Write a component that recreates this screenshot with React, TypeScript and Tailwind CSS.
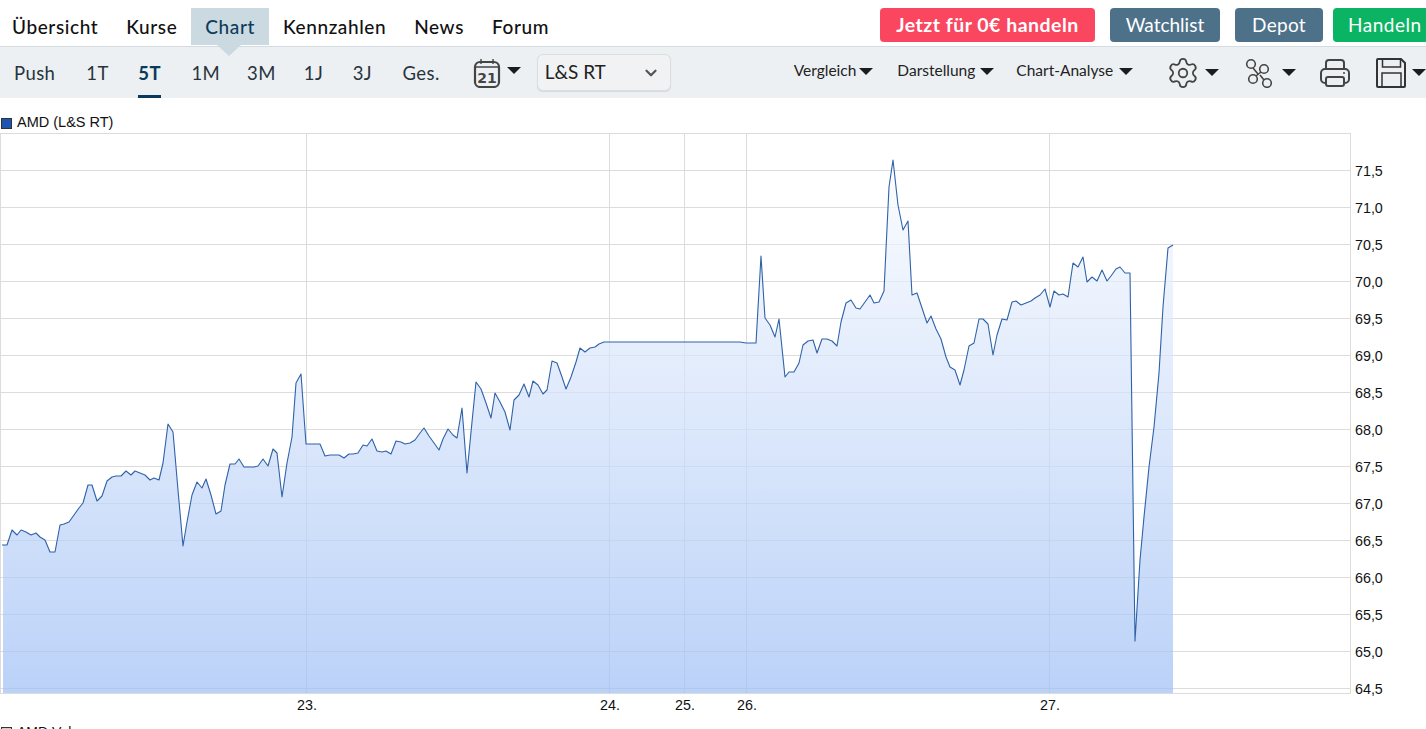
import { Settings, ChevronDown } from 'lucide-react';

const sans = "font-['Lato','Noto_Sans',sans-serif]";

const tabs = ['Übersicht', 'Kurse', 'Chart', 'Kennzahlen', 'News', 'Forum'];
const ranges = [
  { label: 'Push', gap: 'mr-[31px]' },
  { label: '1T', gap: 'mr-[29.5px]' },
  { label: '5T', gap: 'mr-[30.5px]' },
  { label: '1M', gap: 'mr-[27px]' },
  { label: '3M', gap: 'mr-[28px]' },
  { label: '1J', gap: 'mr-[29.5px]' },
  { label: '3J', gap: 'mr-[30.5px]' },
  { label: 'Ges.', gap: '' },
];

const yTicks = ['71,5', '71,0', '70,5', '70,0', '69,5', '69,0', '68,5', '68,0', '67,5', '67,0', '66,5', '66,0', '65,5', '65,0', '64,5'];
const xTicks = [
  { x: 306, label: '23.' },
  { x: 609, label: '24.' },
  { x: 684, label: '25.' },
  { x: 746, label: '26.' },
  { x: 1049, label: '27.' },
];

// traced from the price line, page coordinates
const line = `2,545 7,545 12,530 17,535 21,530 26,532 31,535 36,533 40,537 45,540 50,552 55,552 60,525 64,524 69,522 74,515 79,508 83,503 88,485 92,485 97,501 102,496 107,481 112,477 116,476 121,476 126,471 131,475 135,471 140,473 145,475 150,480 154,478 159,480 163,463 168,424 173,432 178,490 183,546 187,522 192,495 197,482 202,488 206,479 211,495 216,514 221,511 225,485 230,464 235,464 239,459 244,467 249,467 254,467 258,466 263,459 268,466 273,449 277,453 282,497 287,463 292,437 296,383 301,374 306,444 311,444 315,444 320,444 325,456 330,455 334,455 339,455 344,458 349,454 353,454 358,453 363,445 367,446 372,439 377,451 382,452 386,451 391,454 396,441 401,442 405,444 410,443 415,440 420,433 424,428 429,436 434,443 439,450 443,439 448,429 453,435 457,438 462,408 467,473 472,422 476,382 481,389 486,403 491,418 495,393 500,402 505,412 510,430 514,400 519,395 524,384 529,397 533,381 538,385 543,394 547,390 552,361 557,363 562,377 566,389 571,377 576,362 580,348 585,352 590,348 595,347 599,344 604,342 740,342 746,343 756,343 761,256 765,318 770,325 775,337 779,319 785,377 789,372 794,372 799,363 803,345 808,341 813,340 817,353 822,339 827,339 832,341 837,346 841,322 846,303 851,300 856,308 860,309 865,302 870,295 874,303 879,302 884,291 889,187 893,160 898,205 903,230 908,221 912,295 917,293 922,308 927,323 931,316 936,329 941,339 946,357 950,367 955,370 960,385 964,370 969,346 974,343 979,319 983,319 988,324 993,355 997,335 1002,319 1007,320 1012,302 1016,301 1021,305 1026,303 1031,301 1035,298 1040,295 1045,289 1050,307 1054,291 1059,295 1063,294 1068,297 1073,263 1078,267 1083,257 1087,282 1092,277 1097,281 1102,270 1107,281 1111,276 1116,269 1120,267 1125,273 1130,273 1135,641 1140,560 1144,517 1149,467 1154,427 1159,373 1163,307 1168,248 1173,245`;

function Caret({ className = '' }: { className?: string }) {
  return (
    <svg width="14" height="7" viewBox="0 0 14 7" className={`shrink-0 ${className}`}>
      <path d="M0 0h14L7 7z" fill="#1c1c1c" />
    </svg>
  );
}

function PriceChart() {
  return (
    <svg width="1426" height="592" viewBox="0 133 1426 592" className="block shrink-0">
      <defs>
        <linearGradient id="area" gradientUnits="userSpaceOnUse" x1="0" y1="133" x2="0" y2="693">
          <stop offset="0" stopColor="#ffffff" stopOpacity="0.7" />
          <stop offset="1" stopColor="#a0c0f5" stopOpacity="0.72" />
        </linearGradient>
      </defs>
      <rect x="0.5" y="133.5" width="1350" height="560" fill="#fff" stroke="#dcdcdc" />
      {yTicks.map((t, i) => (
        <line key={t} x1="0" x2="1350" y1={170.5 + i * 37} y2={170.5 + i * 37} stroke="#dcdcdc" />
      ))}
      {xTicks.map((t) => (
        <line key={t.x} x1={t.x + 0.5} x2={t.x + 0.5} y1="133" y2="693" stroke="#dcdcdc" />
      ))}
      <polygon points={`3,693 ${line.replace('2,545', '3,545')} 1173,693`} fill="url(#area)" />
      <polyline points={line} fill="none" stroke="#2f62a8" strokeWidth="1.1" strokeLinejoin="round" />
      {yTicks.map((t, i) => (
        <text key={t} x="1355" y={176 + i * 37} fontSize="14.3" fill="#111" fontFamily="'Liberation Sans', sans-serif">
          {t}
        </text>
      ))}
      {xTicks.map((t) => (
        <text key={t.x} x={t.x + 1} y="710" fontSize="14.3" textAnchor="middle" fill="#111" fontFamily="'Liberation Sans', sans-serif">
          {t.label}
        </text>
      ))}
    </svg>
  );
}

export default function App() {
  return (
    <div className={`h-[729px] w-[1426px] overflow-hidden bg-white ${sans}`}>
      {/* Tabs + buttons */}
      <div className="flex h-[47px] items-start border-b border-[#d5dce1] pt-2">
        <nav className="flex">
          {tabs.map((t, i) => (
            <div
              key={t}
              className={`relative flex h-[37px] items-center pt-[1px] text-[19px] font-medium tracking-[0.6px] ${i === 0 ? 'pl-3 pr-[14px]' : 'px-[14px]'} ${t === 'Chart' ? 'bg-[#cbd9e1] text-[#0d3c5c]' : 'text-[#111]'}`}
            >
              {t}
              {t === 'Chart' && (
                <span className="absolute left-[26px] top-[37px] h-0 w-0 border-x-[12px] border-t-[11px] border-x-transparent border-t-[#cbd9e1]" />
              )}
            </div>
          ))}
        </nav>
        <div className="ml-auto flex h-[34px] text-[19px] text-white">
          <button className="flex w-[215px] items-center justify-center rounded bg-[#fa465f] text-[19.5px] font-bold tracking-[0.5px]">Jetzt für 0€ handeln</button>
          <button className="ml-[15px] flex w-[110px] items-center justify-center rounded bg-[#4d7189]">Watchlist</button>
          <button className="ml-[15px] flex w-[88px] items-center justify-center rounded bg-[#4d7189] tracking-[0.3px]">Depot</button>
          <button className="-mr-[10px] ml-[10px] flex w-[103px] items-center rounded bg-[#0ab463] pl-[15px] tracking-[0.5px]">Handeln</button>
        </div>
      </div>

      {/* Toolbar */}
      <div className="flex h-[51px] items-center bg-[#edf0f3] text-[#27343d]">
        <div className="flex h-full shrink-0 pl-[14px] text-[18.5px] tracking-[0.4px]">
          {ranges.map((r) => (
            <div
              key={r.label}
              className={`flex h-full items-center pt-[3px] ${r.gap} ${r.label === '5T' ? 'border-b-[3px] border-[#0a3a5a] pt-[6px] font-bold text-[#0a3a5a]' : ''}`}
            >
              {r.label}
            </div>
          ))}
        </div>

        <svg width="28" height="30" viewBox="0 0 28 30" className="ml-[33px] shrink-0" fill="none" stroke="#444" strokeWidth="2.2">
          <rect x="2" y="4" width="24" height="25" rx="5" />
          <path d="M2 9h24M8 1v5M20 1v5" strokeWidth="1.4" />
          <text x="14" y="25" textAnchor="middle" fontSize="14" fontWeight="700" fill="#444" stroke="none" fontFamily="'DejaVu Sans', sans-serif">21</text>
        </svg>
        <Caret className="ml-[6px] -mt-1" />

        <div className="ml-[16px] flex h-[37px] w-[134px] shrink-0 items-center justify-between rounded-md border border-[#dadee1] bg-[#f0f2f4] pl-[7px] pr-[10px] text-[19px] text-[#222] shadow-[0_1px_1px_#d5d8db]">
          L&amp;S RT
          <ChevronDown size={18} strokeWidth={3} color="#555" />
        </div>

        <div className="ml-[123px] -mt-[3px] flex shrink-0 items-center whitespace-nowrap text-[15.5px] text-[#222]">
          <span>Vergleich</span>
          <Caret className="ml-[3px]" />
          <span className="ml-[24px]">Darstellung</span>
          <Caret className="ml-[5px]" />
          <span className="ml-[22px]">Chart-Analyse</span>
          <Caret className="ml-[6px]" />
        </div>

        <div className="flex shrink-0 items-center">
          <Settings size={34} strokeWidth={1.25} color="#444" className="ml-[33px] shrink-0" />
          <Caret className="ml-[5px]" />
          <svg width="30" height="30" viewBox="0 0 30 30" className="ml-[26px] shrink-0" fill="none" stroke="#444" strokeWidth="1.6">
            <circle cx="6" cy="6" r="4.3" />
            <circle cx="19" cy="11" r="4.3" />
            <circle cx="8" cy="21" r="4.3" />
            <circle cx="22" cy="25" r="4.3" />
            <path d="M8 10l5 6M16 14l-5 4M15 17l4 5" />
          </svg>
          <Caret className="ml-[7px]" />
          <svg width="30" height="28" viewBox="0 0 30 28" className="ml-[24px] shrink-0" fill="none" stroke="#444" strokeWidth="2">
            <path d="M6 10V4a3 3 0 0 1 3-3h12a3 3 0 0 1 3 3v6" />
            <rect x="1" y="10" width="28" height="14" rx="4" />
            <rect x="6" y="18" width="18" height="9" rx="2" fill="#edf0f3" />
            <circle cx="24" cy="14" r="1" fill="#444" stroke="none" />
          </svg>
          <svg width="30" height="30" viewBox="0 0 30 30" className="ml-[26px] shrink-0" fill="none" stroke="#333" strokeWidth="2">
            <path d="M2 1h23l4 4v23a1 1 0 0 1-1 1H2a1 1 0 0 1-1-1V2a1 1 0 0 1 1-1z" />
            <path d="M6.500 1v8h18V1M6 29V15h19v14" strokeWidth="1.5" />
          </svg>
          <Caret className="ml-[6px]" />
        </div>
      </div>

      {/* Legend */}
      <div className="flex h-[35px] items-center pt-[15px] font-['Liberation_Sans',sans-serif] text-[14.5px] text-[#111]">
        <span className="ml-[1px] mr-[5px] h-[11px] w-[11px] border border-[#333] bg-[#1d55b0]" />
        AMD (L&amp;S RT)
      </div>

      <PriceChart />

      <div className="flex items-center font-['Liberation_Sans',sans-serif] text-sm leading-none text-[#111]">
        <span className="ml-[1px] mr-[5px] h-[11px] w-[11px] border border-[#333] bg-[#ccc]" />
        AMD Vol.
      </div>
    </div>
  );
}
